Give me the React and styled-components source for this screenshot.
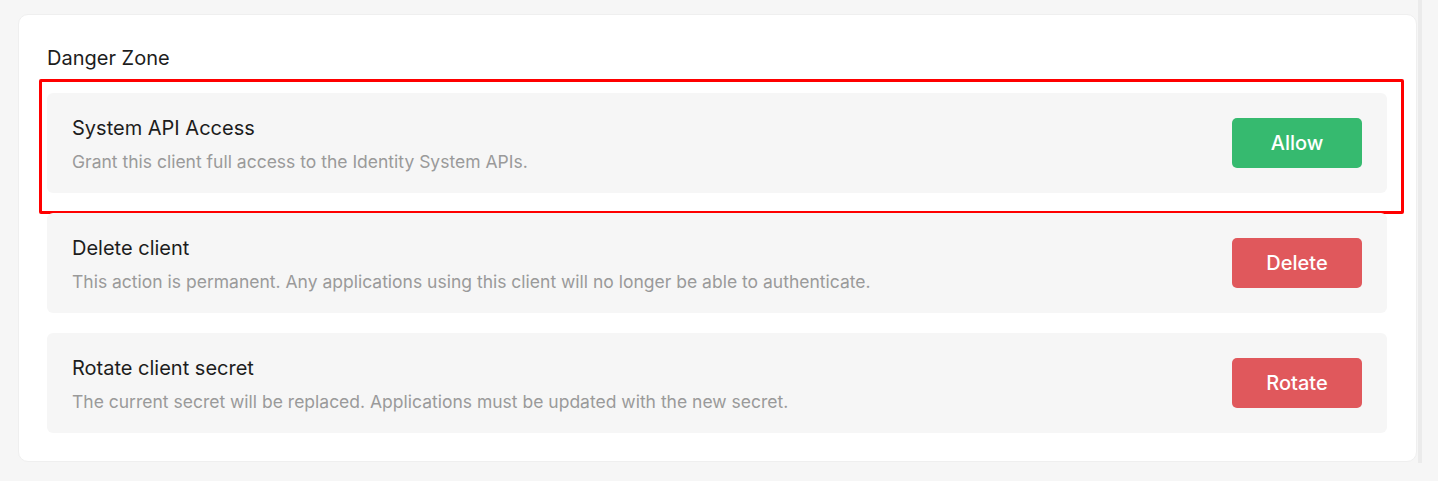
import React from 'react'
import styled, { createGlobalStyle } from 'styled-components'

const GlobalStyle = createGlobalStyle`
  html, body {
    margin: 0;
    padding: 0;
    background: #f6f6f6;
    font-family: Inter, 'Noto Sans', sans-serif;
  }
`

const Page = styled.div`
  display: flex;
  height: 481px;
  box-sizing: border-box;
  padding: 14px 0 0 18px;
`
const Card = styled.div`
  width: 1399px;
  height: 448px;
  box-sizing: border-box;
  padding: 31px 29px 0 28px;
  background: #fff;
  border: 1px solid #efefef;
  border-radius: 10px;
`
const ScrollTrack = styled.div`
  width: 4px;
  height: 463px;
  margin: -14px 0 0 1px;
  background: #ebebeb;
`
const Heading = styled.h2`
  margin: 0 0 23px;
  font-size: 20px;
  font-weight: 400;
  line-height: 24px;
  color: #1d1d1d;
`
const List = styled.div`
  display: flex;
  flex-direction: column;
  gap: 20px;
`
const RowWrap = styled.div`
  position: relative;
`
const Highlight = styled.div`
  position: absolute;
  left: -8px;
  top: -14px;
  right: -17px;
  bottom: -21px;
  border: 3px solid #ff0000;
  border-radius: 2px;
  pointer-events: none;
`
const Row = styled.div`
  display: flex;
  align-items: center;
  justify-content: space-between;
  height: 100px;
  box-sizing: border-box;
  padding: 0 25px;
  background: #f6f6f6;
  border-radius: 6px;
`
const Info = styled.div`
  padding-top: 3px;
`
const Title = styled.div`
  font-size: 20px;
  line-height: 24px;
  font-weight: 400;
  color: #1d1d1d;
`
const Description = styled.div`
  margin-top: 10px;
  font-size: 17.5px;
  line-height: 24px;
  color: #9a9a9a;
`
const ActionButton = styled.button`
  width: 130px;
  height: 50px;
  flex-shrink: 0;
  border: none;
  border-radius: 5px;
  background: ${props => (props.tone === 'safe' ? '#36ba6f' : '#e0585c')};
  color: #fff;
  font-family: inherit;
  font-size: 20px;
  font-weight: 500;
  cursor: pointer;
`

const items = [
  {
    title: 'System API Access',
    text: 'Grant this client full access to the Identity System APIs.',
    action: 'Allow',
    tone: 'safe',
    highlighted: true
  },
  {
    title: 'Delete client',
    text: 'This action is permanent. Any applications using this client will no longer be able to authenticate.',
    action: 'Delete',
    tone: 'danger'
  },
  {
    title: 'Rotate client secret',
    text: 'The current secret will be replaced. Applications must be updated with the new secret.',
    action: 'Rotate',
    tone: 'danger'
  }
]

const App = () => (
  <>
    <GlobalStyle />
    <Page>
      <Card>
        <Heading>Danger Zone</Heading>
        <List>
          {items.map(item => (
            <RowWrap key={item.title}>
              {item.highlighted && <Highlight />}
              <Row>
                <Info>
                  <Title>{item.title}</Title>
                  <Description>{item.text}</Description>
                </Info>
                <ActionButton tone={item.tone}>{item.action}</ActionButton>
              </Row>
            </RowWrap>
          ))}
        </List>
      </Card>
      <ScrollTrack />
    </Page>
  </>
)

export default App
